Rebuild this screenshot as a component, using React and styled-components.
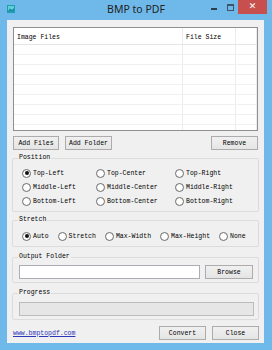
import React from 'react'
import styled, { createGlobalStyle } from 'styled-components'

const GlobalStyle = createGlobalStyle`
  html, body {
    margin: 0;
    padding: 0;
    background: #6fb9ea;
  }
  body {
    font-family: "Liberation Mono", "DejaVu Sans Mono", monospace;
  }
`

const Window = styled.div`
  width: 272px;
  height: 350px;
  box-sizing: border-box;
  background: #6fb9ea;
  display: flex;
  flex-direction: column;
  padding: 0 8px 7px 7px;
`

const TitleBar = styled.div`
  height: 20px;
  margin: 0 -8px 0 -7px;
  display: grid;
  grid-template-columns: 1fr auto 1fr;
  align-items: start;
`

const AppIcon = styled.svg`
  margin: 5px 0 0 7px;
  display: block;
`

const Title = styled.div`
  font-family: "Noto Sans", "Open Sans", sans-serif;
  font-size: 10.5px;
  line-height: 18px;
  color: #222;
`

const Controls = styled.div`
  justify-self: end;
  display: flex;
  padding-right: 5px;
`

const CtrlButton = styled.div`
  width: ${p => p.w}px;
  height: 14px;
  display: flex;
  justify-content: center;
  align-items: flex-start;
  background: ${p => p.close ? '#c7504f' : 'transparent'};
  color: #fff;
  font-family: "DejaVu Sans", sans-serif;
  font-size: 9px;
  line-height: 13px;
`

const MinGlyph = styled.span`
  width: 6px;
  height: 2px;
  margin-top: 8px;
  background: #2b3d4f;
`

const MaxGlyph = styled.span`
  width: 5px;
  height: 4px;
  margin-top: 4px;
  border: 1px solid #3d5468;
  border-top-width: 2px;
`

const Client = styled.div`
  height: 323px;
  box-sizing: border-box;
  background: #f0f0f0;
  display: flex;
  flex-direction: column;
  padding: 7px 5px 3px 5px;
  font-size: 6.5px;
  color: #000;
`

const ListBox = styled.div`
  height: 104px;
  flex: none;
  box-sizing: border-box;
  margin: 0 1px;
  border: 1px solid #8e8f8f;
  background: #fff;
  overflow: hidden;
`

const ListRow = styled.div`
  display: grid;
  grid-template-columns: 169px 53px 1fr;
  height: ${p => p.header ? 17 : 10}px;
  box-sizing: border-box;
  border-bottom: 1px solid ${p => p.header ? '#e5e5e5' : '#f0f0f0'};
`

const ListCell = styled.div`
  box-sizing: border-box;
  border-right: 1px solid #ececec;
  padding: 2px 0 0 3px;
  display: flex;
  align-items: center;
  white-space: nowrap;
`

const ButtonRow = styled.div`
  display: flex;
  gap: 6px;
  margin: 5px 1px 0 1px;
`

const Button = styled.div`
  width: ${p => p.w || 47}px;
  height: 14px;
  box-sizing: border-box;
  border: 1px solid #acacac;
  background: linear-gradient(#f0f0f0, #e5e5e5);
  display: flex;
  align-items: center;
  justify-content: center;
  white-space: nowrap;
  margin-left: ${p => p.push ? 'auto' : '0'};
`

const Group = styled.fieldset`
  margin: ${p => p.top}px 0 0 0;
  border: 1px solid #dcdcdc;
  border-radius: 2px;
  padding: ${p => p.pt}px 5px 3px 6px;
  min-width: 0;
`

const Legend = styled.legend`
  padding: 0 1px;
  margin-left: -1px;
  line-height: 8px;
  font-size: 6.5px;
`

const RadioGrid = styled.div`
  display: grid;
  grid-template-columns: 74px 79px 1fr;
  grid-auto-rows: 14px;
  padding-left: 3px;
`

const RadioLine = styled.div`
  display: flex;
  gap: 9px;
  height: 14px;
  padding-left: 3px;
`

const RadioItem = styled.div`
  display: flex;
  align-items: center;
  gap: 2px;
  white-space: nowrap;
`

const RadioCircle = styled.span`
  width: 9px;
  height: 9px;
  box-sizing: border-box;
  border-radius: 50%;
  border: 1px solid #6e6e6e;
  background: radial-gradient(circle, #fff 40%, #ececec 100%);
  display: flex;
  align-items: center;
  justify-content: center;
  &::after {
    content: '';
    width: 4px;
    height: 4px;
    border-radius: 50%;
    background: ${p => p.checked ? '#111' : 'transparent'};
  }
`

const FolderRow = styled.div`
  display: flex;
  gap: 5px;
`

const TextBox = styled.div`
  flex: 1;
  height: 14px;
  box-sizing: border-box;
  border: 1px solid #abadb3;
  background: #fff;
`

const ProgressBar = styled.div`
  height: 14px;
  box-sizing: border-box;
  border: 1px solid #bcbcbc;
  background: #e6e6e6;
  margin-right: -1px;
`

const Footer = styled.div`
  display: flex;
  align-items: center;
  gap: 6px;
  margin-top: auto;
`

const Link = styled.a`
  margin-left: 1px;
  margin-right: auto;
  color: #2b36b8;
  text-decoration: underline;
`

const Radio = ({ label, checked }) => (
  <RadioItem>
    <RadioCircle checked={checked} />
    <span>{label}</span>
  </RadioItem>
)

const positions = [
  ['Top-Left', true], ['Top-Center'], ['Top-Right'],
  ['Middle-Left'], ['Middle-Center'], ['Middle-Right'],
  ['Bottom-Left'], ['Bottom-Center'], ['Bottom-Right'],
]

const stretches = [['Auto', true], ['Stretch'], ['Max-Width'], ['Max-Height'], ['None']]

export default function App() {
  return (
    <>
      <GlobalStyle />
      <Window>
        <TitleBar>
          <AppIcon width="8" height="8" viewBox="0 0 8 8">
            <rect width="8" height="8" fill="#1e9db4" />
            <rect x="1" y="1" width="6" height="5" fill="#5fd0d8" />
            <path d="M1 6 L3 3.5 L5 5 L7 3 V6 Z" fill="#1a8aa0" />
          </AppIcon>
          <Title>BMP to PDF</Title>
          <Controls>
            <CtrlButton w={17}><MinGlyph /></CtrlButton>
            <CtrlButton w={16}><MaxGlyph /></CtrlButton>
            <CtrlButton w={29} close>✕</CtrlButton>
          </Controls>
        </TitleBar>
        <Client>
          <ListBox>
            <ListRow header>
              <ListCell>Image Files</ListCell>
              <ListCell>File Size</ListCell>
              <ListCell />
            </ListRow>
            {Array.from({ length: 9 }).map((_, i) => (
              <ListRow key={i}>
                <ListCell />
                <ListCell />
                <ListCell />
              </ListRow>
            ))}
          </ListBox>
          <ButtonRow>
            <Button w={46}>Add Files</Button>
            <Button w={47}>Add Folder</Button>
            <Button w={47} push>Remove</Button>
          </ButtonRow>
          <Group top={4} pt={4}>
            <Legend>Position</Legend>
            <RadioGrid>
              {positions.map(([label, checked]) => (
                <Radio key={label} label={label} checked={checked} />
              ))}
            </RadioGrid>
          </Group>
          <Group top={4} pt={5}>
            <Legend>Stretch</Legend>
            <RadioLine>
              {stretches.map(([label, checked]) => (
                <Radio key={label} label={label} checked={checked} />
              ))}
            </RadioLine>
          </Group>
          <Group top={6} pt={4}>
            <Legend>Output Folder</Legend>
            <FolderRow>
              <TextBox />
              <Button w={48}>Browse</Button>
            </FolderRow>
          </Group>
          <Group top={6} pt={5}>
            <Legend>Progress</Legend>
            <ProgressBar />
          </Group>
          <Footer>
            <Link>www.bmptopdf.com</Link>
            <Button w={47}>Convert</Button>
            <Button w={47}>Close</Button>
          </Footer>
        </Client>
      </Window>
    </>
  )
}
